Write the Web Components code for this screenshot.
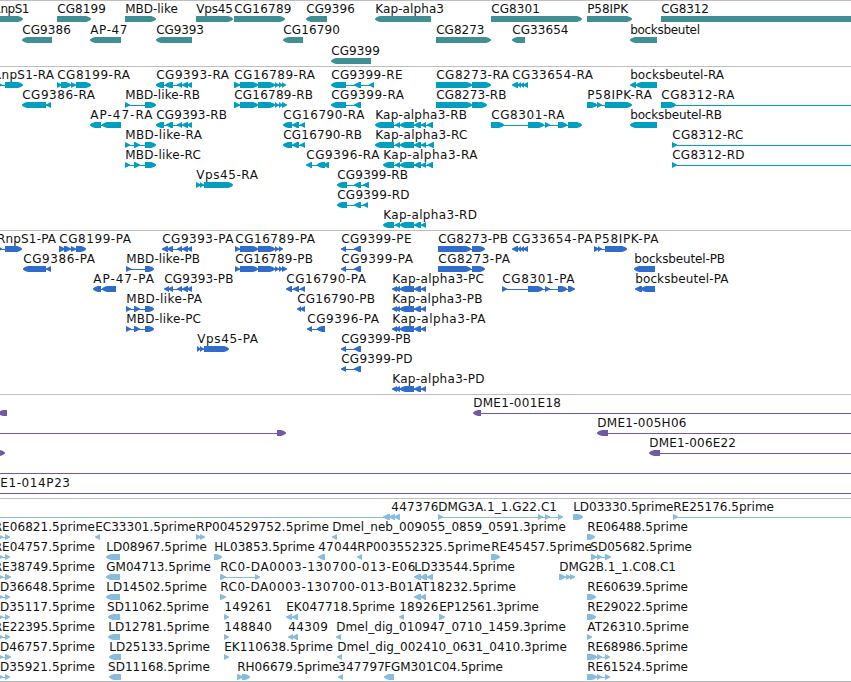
<!DOCTYPE html>
<html lang="en">
<head>
<meta charset="utf-8">
<title>Genome map</title>
<style>
  body { margin: 0; background: #fff; overflow: hidden; }
</style>
</head>
<body>
<genome-map>
  <genome-track data-name="genes" data-color="#3f8f94" data-lane="21"></genome-track>
  <genome-track data-name="transcripts" data-color="#009fbf" style="--gap: 3px"></genome-track>
  <genome-track data-name="proteins" data-color="#2f6ccc" style="--gap: 3px"></genome-track>
  <genome-track data-name="clones" data-color="#7458a8" style="--gap: 3px"></genome-track>
  <genome-track data-name="ests" data-color="#87bcdd"></genome-track>
</genome-map>

<script>
// One string per lane, features separated by "|".
// Feature: label[@x] labelEnd strand blocks... ; "=a-b" is a bare line, "." is no label.
const kap = "395-400 400-414 414-421 421-426";
const cg16789 = "240-258 258-275 275-279 279-283";
const TRACKS = {
  genes: [
    "RnpS1@-7.5 29 + -20-23|CG8199 105.3 + 57-91|MBD-like 177.3 + 125-156|Vps45 232.3 + 196-233|CG16789 291 + 234-285|CG9396 354.3 - 306-327|Kap-alpha3 443.5 - 375-431|CG8301 539.5 + 491-582|P58IPK 627.5 + 587-632|CG8312 708.5 + 661-870",
    "CG9386 70.3 - 22-52|AP-47 127 - 90-121|CG9393 203.5 - 156-192|CG16790 339.5 - 283-303|CG8273 484 + 436-491|CG33654 568 - 512-525|bocksbeutel 699.5 - 630-657",
    "CG9399 379.5 - 331-371"
  ],
  transcripts: [
    "RnpS1-RA@-7 53.5 + -3-2 5-23|CG8199-RA 129.5 + 57-62 61-71 71-76 76-91|CG9393-RA 228.5 - 156-164 165-173 177-182 182-188 187-192|CG16789-RA 314.5 + 234-240 " + cg16789 + " 282-286|CG9399-RE 402 - 331-346 354-361 369-374|CG8273-RA 508.5 + 436-472 472-491|CG33654-RA 592.5 - 512-518 517-521 520-524 523-528|bocksbeutel-RA 723.5 - 630-636 636-657",
    "CG9386-RA 94.5 - 22-46 46-51|MBD-like-RB 199.5 + 125-130 145-156|CG16789-RB 312.5 + 234-240 " + cg16789 + " 282-287|CG9399-RA 403.5 - 331-346 354-361|CG8273-RB 506 + 436-472 472-487|P58IPK-RA 651.5 + 587-597 597-602 605-632|CG8312-RA 734 + 661-676 =676-851",
    "AP-47-RA 152 - 90-101 102-121|CG9393-RB 226.5 - 156-164 166-173 177-182 182-188 187-192|CG16790-RA 364 - 283-292 292-299 300-305|Kap-alpha3-RB 466.5 - 375-394 " + kap + " 427-433|CG8301-RA 564 + 491-504 528-544 545-550 558-567 568-582|bocksbeutel-RB 721.5 - 630-657",
    "MBD-like-RA 201.5 + 125-130 134-140 145-156|CG16790-RB 361.5 - 283-292 292-299 300-305|Kap-alpha3-RC 467 - 375-394 " + kap + " 428-434|CG8312-RC 743 + 672-677 =677-851",
    "MBD-like-RC 200.5 + 125-130 134-140 145-156|CG9396-RA 379 - 306-312 317-325 323-329|Kap-alpha3-RA 477 - 383-394 " + kap + " 427-433|CG8312-RD 744 + 672-677 =677-851",
    "Vps45-RA 257.5 + 196-201 200-204 204-233|CG9399-RB 407.5 - 337-347 354-361 363-369",
    "CG9399-RD 409 - 337-347 354-361 363-368",
    "Kap-alpha3-RD 476.5 - 383-394 " + kap
  ],
  proteins: [
    "RnpS1-PA@-3 55.5 + -3-2 5-22|CG8199-PA 130.5 + 59-65 64-71 71-76 76-86|CG9393-PA 233 - 162-168 167-173 177-182 182-188 187-192|CG16789-PA 314.5 + 235-240 " + cg16789 + "|CG9399-PE 411 - 341-346 354-361|CG8273-PB 507.5 + 438-471 472-485|CG33654-PA 592 - 512-518 517-521 520-524 523-528|P58IPK-PA 658 + 594-599 598-602 605-627",
    "CG9386-PA 94.5 - 23-46 46-51|MBD-like-PB 199.5 + 126-131 145-154|CG16789-PB 312.5 + 235-240 " + cg16789 + " 282-287|CG9399-PA 412.5 - 341-346 354-361|CG8273-PA 509.5 + 438-471 472-485|bocksbeutel-PB 724.5 - 634-655",
    "AP-47-PA 153.5 - 93-101 102-116|CG9393-PB 233 - 164-169 168-173 177-182 182-188 187-192|CG16790-PA 365.5 - 286-292 293-299 300-305|Kap-alpha3-PC 483.5 - 392-397 " + kap + "|CG8301-PA 574 + 502-507 528-543 545-550 558-567 568-575|bocksbeutel-PA 728 - 635-642 641-655",
    "MBD-like-PA 201.5 + 126-131 134-140 145-154|CG16790-PB 374.5 - 297-301 300-305|Kap-alpha3-PB 482 - 392-397 " + kap,
    "MBD-like-PC 200.5 + 126-131 134-140 145-154|CG9396-PA 378.5 - 307-312 317-325|Kap-alpha3-PA 485 - 392-397 " + kap,
    "Vps45-PA 257.5 + 197-201 200-204 204-229|CG9399-PB 410.5 - 341-346 354-361",
    "CG9399-PD 412 - 341-346 354-361",
    "Kap-alpha3-PD 484 - 392-397 " + kap
  ],
  clones: [
    ". 0 - -2-7|DME1-001E18 560.5 - 473-481 =481-851",
    ". 0 + =0-277 277-286|DME1-005H06 686 - 597-608 =608-851",
    ". 0 + -3-5|DME1-006E22 735.5 - 649-660 =660-851",
    ". 0 + =0-851",
    "DME1-014P23@-20.5 69.5 + =0-851"
  ],
  ests: [
    ". 0 - =0-384|447376@391.3 438 - 383-390 389-395 394-400|DMG3A.1_1.G22.C1 556.5 + 438-443 538-543 545-550 558-563|LD03330.5prime 673 + 573-583|RE25176.5prime 773.5 + 673-678 =678-851",
    "RE06821.5prime@-6.3 94.5 + -3-3 5-10|EC33301.5prime 195.5 - 95-100|RP004529752.5prime 328.5 + 196-201 200-205|Dmel_neb_009055_0859_0591.3prime 565.5 - 332-337|RE06488.5prime 687.5 + 587-595",
    "RE04757.5prime@-6.3 94.5 + -3-3 5-10|LD08967.5prime 206.5 - 106-120|HL03853.5prime 314.5 + 214-222|47044 357 - 318-325|RP003552325.5prime 490 - 357-362|RE45457.5prime 591.5 + 491-500|SD05682.5prime@590.3 691.5 + 591-597 597-602 605-611",
    "RE38749.5prime@-6.3 94.5 + -3-3 5-11|GM04713.5prime 210.5 - 106-120|RC0-DA0003-130700-013-E06 415 + 220-226 255-260|LD33544.5prime 514.5 - 414-421 420-427 427-433|DMG2B.1_1.C08.C1 675.5 + 559-566 566-571 570-575",
    "LD36648.5prime@-6.8 94.5 + -3-3 5-10|LD14502.5prime 206.5 - 106-120|RC0-DA0003-130700-013-B01 413.5 + 220-226|AT18232.5prime 515.5 - 414-421 420-426|RE60639.5prime 687.5 + 587-596",
    "LD35117.5prime@-6.8 94.5 + -3-3 5-10|SD11062.5prime@107 208.5 - 108-120|149261 271.5 + 224-229|EK047718.5prime 394.5 - 286-292 292-298|18926 438 - 399-404|EP12561.3prime 538.5 + 439-445|RE29022.5prime 687.5 + 587-596",
    "RE22395.5prime@-6.3 94.5 + -3-3 5-10|LD12781.5prime 209 - 108-120|148840 271.5 + 224-229|44309 327.5 - 288-293 292-298|Dmel_dig_010947_0710_1459.3prime 565.5 - 336-341|AT26310.5prime 688.5 + 587-592",
    "LD46757.5prime@-6.8 94.5 + -3-3 5-11|LD25133.5prime 209.5 - 109-121|EK110638.5prime 332.5 + 224-229|Dmel_dig_002410_0631_0410.3prime 566.5 - 337-342|RE68986.5prime 687.5 + 587-597 597-602 605-610",
    "LD35921.5prime@-6.8 94.5 + -3-3 5-10|SD11168.5prime@108 209.5 - 109-121|RH06679.5prime 339 + 237-243 242-250|347797 384.5 - 338-343|FGM301C04.5prime 502.5 - 384-394|RE61524.5prime 687.5 + 587-597 597-602 605-610"
  ]
};

const HEAD = 5;   // length of an arrow head
const TOP = 15;   // y of the block inside its lane
const BASE = 12;  // label baseline

function block(a, b, strand) {
  const h = Math.min(HEAD, b - a);
  // d points along the strand; tail is the flat end
  const d = strand == "+" ? 1 : -1;
  const tip = d > 0 ? b : a;
  const tail = d > 0 ? a : b;
  const neck = tip - d * h;
  const mid = TOP + 3;
  // heads of long blocks bulge a little, short ones are plain triangles
  const bulge = b - a > 7 ? 2.1 : 1.6;
  return `<path d="M${tail} ${TOP}H${neck}L${tip - d * 2} ${mid - bulge}L${tip} ${mid - .5}V${mid + .5}L${tip - d * 2} ${mid + bulge}L${neck} ${TOP + 6}H${tail}Z"/>`;
}

const laneTemplate = document.createElement("template");
laneTemplate.innerHTML = `
<style>
  :host { display: block; }
  svg { display: block; width: 100%; height: 100%; overflow: visible; }
  g { fill: var(--color); }
  rect { shape-rendering: crispEdges; }
  text { font: 12px "DejaVu Sans", sans-serif; fill: #111; }
</style>
<svg></svg>
`;

class FeatureLane extends HTMLElement {
  constructor() {
    super();
    this.attachShadow({mode: "open"});
    this.shadowRoot.appendChild(laneTemplate.content.cloneNode(true));
    this.svg = this.shadowRoot.querySelector("svg");
  }

  connectedCallback() {
    this.render();
  }

  render() {
    this.svg.innerHTML = this.dataset.features.split("|").map(f => this.feature(f)).join("");
  }

  feature(source) {
    const [name, end, strand, ...parts] = source.split(" ");
    const [label, at] = name.split("@");
    let shapes = "";
    let last = null;
    let first = null;
    for (const part of parts) {
      const [, line, a, b] = part.match(/^(=?)(-?\d+)-(\d+)$/);
      const from = Number(a), to = Number(b);
      if (first === null) first = from;
      if (line) {
        shapes += `<rect x="${from}" y="18" width="${to - from}" height="1"/>`;
      } else {
        // intron between this block and the one before it
        if (last !== null && from >= last) {
          shapes += `<rect x="${last - 2}" y="18" width="${from - last + 4}" height="1"/>`;
        }
        shapes += block(from, to, strand);
      }
      last = to;
    }
    let text = "";
    if (label != ".") {
      const x = at ? Number(at) : first + 0.2;
      text = `<text x="${x}" y="${BASE}" textLength="${Number(end) + 0.5 - x}">${label}</text>`;
    }
    return `<g>${shapes}</g>${text}`;
  }
}

const trackTemplate = document.createElement("template");
trackTemplate.innerHTML = `
<style>
  :host {
    display: flex;
    flex-direction: column;
    border-top: 1px solid #bebebe;
    padding-bottom: var(--gap, 2px);
  }
  feature-lane { flex: none; height: var(--lane); }
</style>
`;

class GenomeTrack extends HTMLElement {
  constructor() {
    super();
    this.attachShadow({mode: "open"});
    this.shadowRoot.appendChild(trackTemplate.content.cloneNode(true));
  }

  connectedCallback() {
    this.style.setProperty("--color", this.dataset.color);
    this.style.setProperty("--lane", (this.dataset.lane || 20) + "px");
    for (const row of TRACKS[this.dataset.name]) {
      const lane = document.createElement("feature-lane");
      lane.dataset.features = row;
      this.shadowRoot.appendChild(lane);
    }
  }
}

const mapTemplate = document.createElement("template");
mapTemplate.innerHTML = `
<style>
  :host {
    display: flex;
    flex-direction: column;
    width: 851px;
    overflow: hidden;
    background: #fff;
    border-bottom: 1px solid #bebebe;
  }
</style>
<slot></slot>
`;

class GenomeMap extends HTMLElement {
  constructor() {
    super();
    this.attachShadow({mode: "open"});
    this.shadowRoot.appendChild(mapTemplate.content.cloneNode(true));
  }
}

customElements.define("feature-lane", FeatureLane);
customElements.define("genome-track", GenomeTrack);
customElements.define("genome-map", GenomeMap);
</script>
</body>
</html>
